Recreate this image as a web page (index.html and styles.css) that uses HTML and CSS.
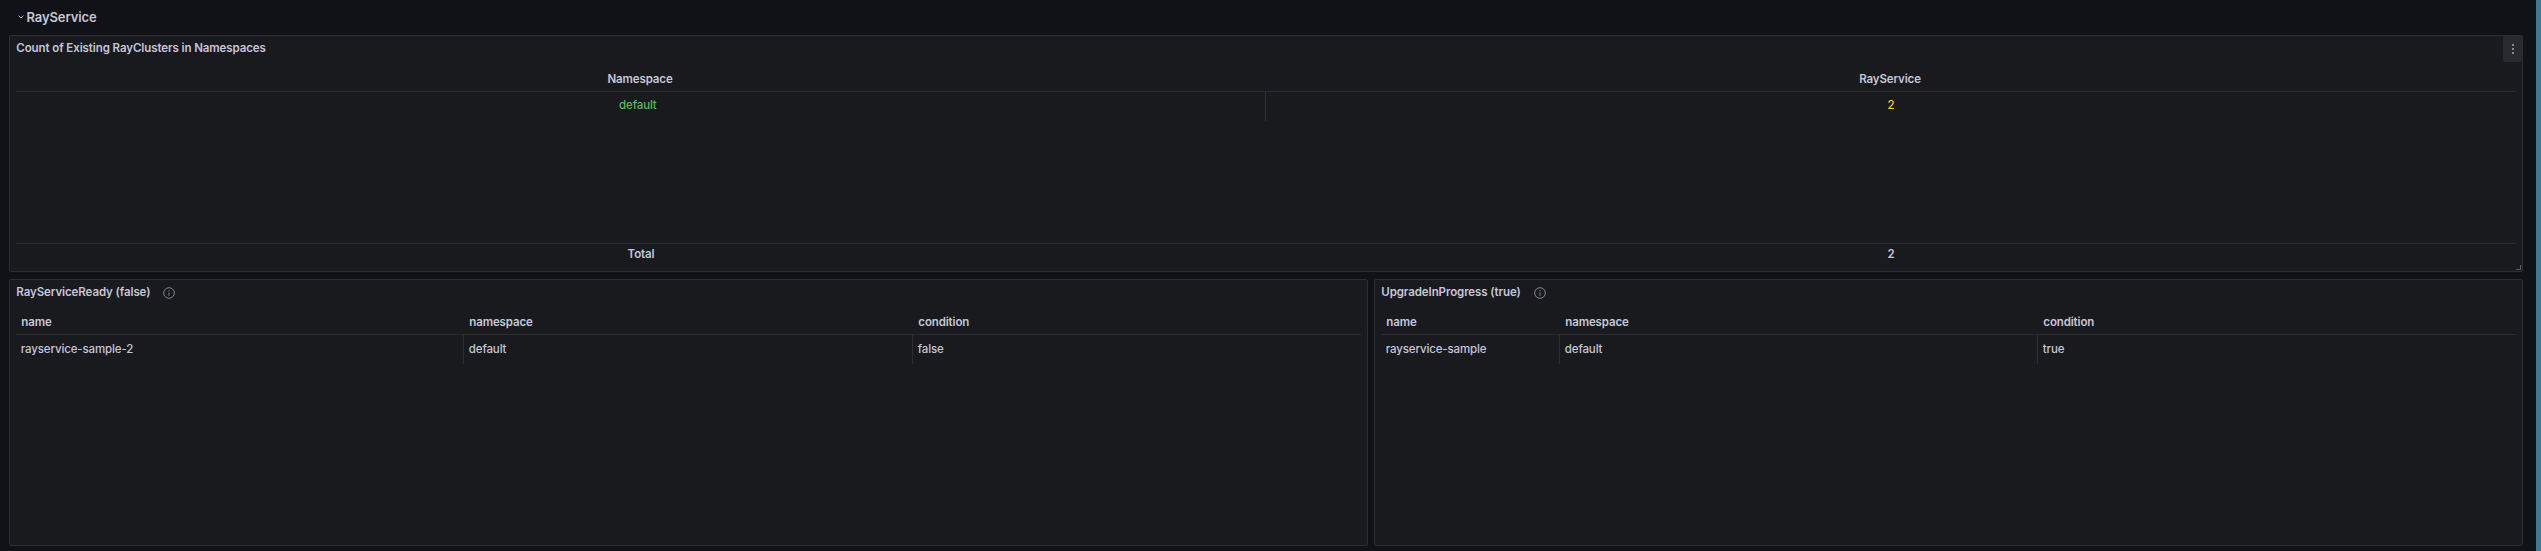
FILE: index.html
```html
<!DOCTYPE html>
<html lang="en">
<head>
<meta charset="utf-8">
<title>RayService</title>
<link rel="stylesheet" href="styles.css">
</head>
<body>
<main class="dashboard">
  <header class="row-title">
    <svg class="chevron" viewBox="0 0 6 4"><path d="M.6 .6 3 3 5.4 .6"/></svg>
    <h1><span>RayService</span></h1>
  </header>
  <section class="panel panel-count">
    <h2 class="panel-title"><span>Count of Existing RayClusters in Namespaces</span></h2>
    <button class="menu" aria-label="Menu"><i></i><i></i><i></i></button>
    <div class="table count">
      <div class="tr head"><div class="th"><span>Namespace</span></div><div class="th"><span>RayService</span></div></div>
      <div class="tr body"><div class="td green"><span>default</span></div><div class="td yellow"><span>2</span></div></div>
      <div class="tr foot"><div class="th"><span>Total</span></div><div class="th"><span>2</span></div></div>
    </div>
    <span class="resize"></span>
  </section>
  <div class="pair">
    <section class="panel">
      <h2 class="panel-title"><span>RayServiceReady (false)</span>
        <svg class="info" viewBox="0 0 12 12"><circle cx="6" cy="6" r="5.3"/><path d="M6 5.5V8.8M6 3.2V4.4"/></svg></h2>
      <div class="table ready">
        <div class="tr head"><div class="th"><span>name</span></div><div class="th"><span>namespace</span></div><div class="th"><span>condition</span></div></div>
        <div class="tr body"><div class="td"><span>rayservice-sample-2</span></div><div class="td"><span>default</span></div><div class="td"><span>false</span></div></div>
      </div>
    </section>
    <section class="panel">
      <h2 class="panel-title"><span>UpgradeInProgress (true)</span>
        <svg class="info" viewBox="0 0 12 12"><circle cx="6" cy="6" r="5.3"/><path d="M6 5.5V8.8M6 3.2V4.4"/></svg></h2>
      <div class="table upgrade">
        <div class="tr head"><div class="th"><span>name</span></div><div class="th"><span>namespace</span></div><div class="th"><span>condition</span></div></div>
        <div class="tr body"><div class="td"><span>rayservice-sample</span></div><div class="td"><span>default</span></div><div class="td"><span>true</span></div></div>
      </div>
    </section>
  </div>
</main>
<div class="edge"></div>
</body>
</html>
```
FILE: styles.css
```css
* { box-sizing: border-box; }
body {
  margin: 0;
  height: 551px;
  display: flex;
  overflow: hidden;
  background: #111217;
  color: #c7c6d8;
  font: 500 11.5px/16px Inter, "Liberation Sans", sans-serif;
  letter-spacing: -0.13px;
}
.dashboard { flex: 1; padding: 0 13px 5px 9px; display: flex; flex-direction: column; }
.edge { width: 5px; background: #3e7b91; }
.row-title { height: 35px; padding: 0 0 2px 9px; display: flex; align-items: center; gap: 2.5px; }
.row-title h1 { margin: 0; font-size: 13px; font-weight: 600; line-height: 18px; letter-spacing: -0.1px; }
.chevron { width: 6px; height: 4px; fill: none; stroke: #c7c6d8; stroke-width: 1; }
.panel {
  position: relative;
  display: flex;
  flex-direction: column;
  padding: 0 6px;
  border: 1px solid #2d2e33;
  border-radius: 2px;
  background: #191a1e;
}
.panel-count { height: 237px; }
.pair { display: grid; grid-template-columns: 1359px 1149px; gap: 6px; padding-top: 7px; height: 274px; }
.panel-title { margin: 0; height: 25px; padding: 0 0 1px 0.3px; display: flex; align-items: center; font-size: inherit; font-weight: 600; letter-spacing: -0.09px; }
.info { width: 12px; height: 12px; margin-left: 13px; margin-top: 1px; fill: none; stroke: #85858f; stroke-width: 1; }
.menu {
  position: absolute; top: 0; right: 0;
  width: 19px; height: 26px; padding: 0; border: 0; border-radius: 2px;
  background: #292a2f;
  display: flex; flex-direction: column; align-items: center; justify-content: center; gap: 2px;
}
.menu i { width: 2px; height: 2px; border-radius: 1px; background: #a9a8b5; }
.resize { position: absolute; right: 1px; bottom: 1px; width: 5px; height: 5px; border: solid #606168; border-width: 0 1px 1px 0; }
.table { flex: 1; display: flex; flex-direction: column; }
.tr { display: grid; }
.count .tr { grid-template-columns: 1250px 1250px; text-align: center; }
.ready .tr { grid-template-columns: 448px 449px 448px; }
.upgrade .tr { grid-template-columns: 179px 478px 478px; }
.head { height: 30px; border-bottom: 1px solid #2d2e33; align-items: center; }
.count .head { height: 31px; }
.body { height: 29px; }
.th { padding-left: 5.3px; padding-top: 5px; font-weight: 600; letter-spacing: -0.12px; }
.td { padding: 6px 4.8px 0; border-right: 1px solid #2d2e33; }
.td:last-child { border-right: 0; }
.count .th { padding-left: 0; padding-right: 2px; }
.count .td { padding-top: 5px; }
.count .td.green { padding-right: 10px; }
.foot { margin-top: auto; height: 28px; border-top: 1px solid #2d2e33; }
.count .foot .th { padding-top: 2px; padding-right: 0; }
.green { color: #5dbb5b; }
.yellow { color: #e6cf25; }
```
